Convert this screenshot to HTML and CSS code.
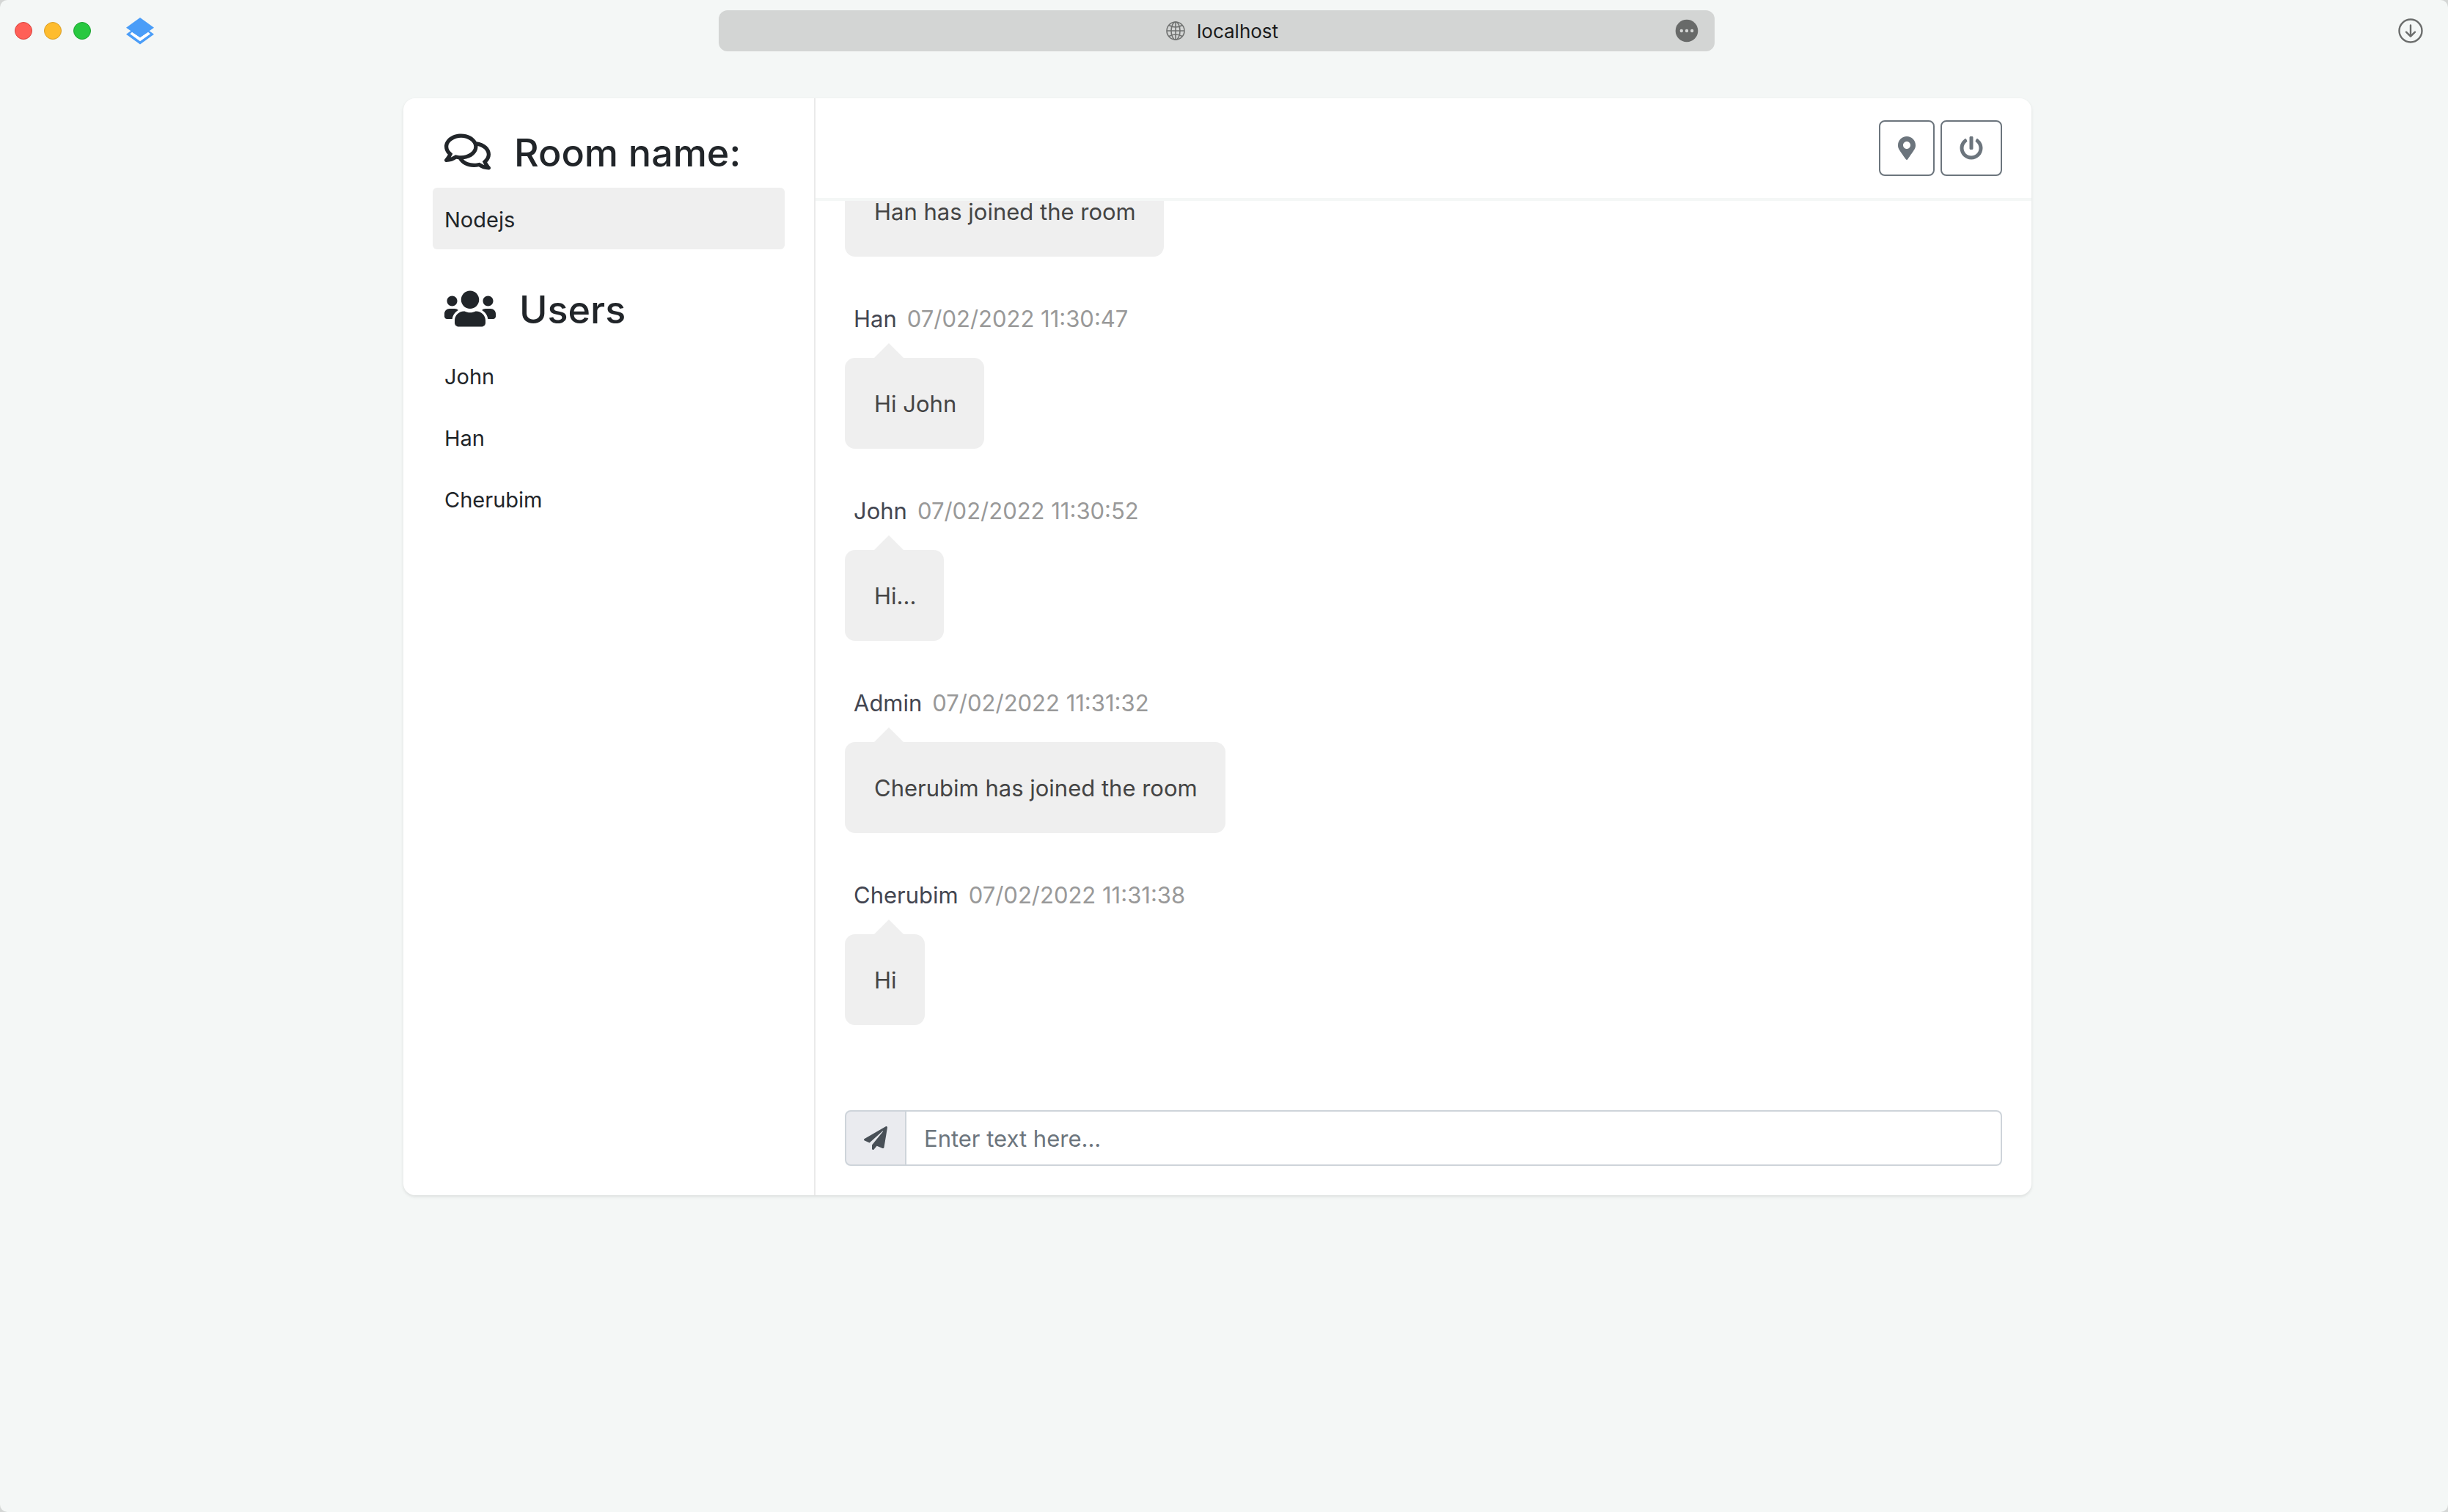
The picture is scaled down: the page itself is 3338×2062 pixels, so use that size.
FILE: index.html
```html
<!DOCTYPE html>
<html lang="en">
<head>
  <meta charset="utf-8">
  <title>Chat</title>
  <link rel="stylesheet" href="styles.css">
</head>
<body>
  <div class="window">
    <header class="toolbar">
      <div class="toolbar-left">
        <div class="lights">
          <button class="light light-close" type="button" aria-label="Close"></button>
          <button class="light light-minimize" type="button" aria-label="Minimize"></button>
          <button class="light light-zoom" type="button" aria-label="Zoom"></button>
        </div>
        <button class="icon-button" type="button" aria-label="Extension">
          <svg width="38" height="37" viewBox="0 0 38 37">
            <path fill="#4a9df8" d="M19 9 38 22.7 19 36.5 0 22.7z"/>
            <path fill="#fff" d="M5.3 22.3 8 19.7 19 27 30 19.7 33 22.3 19 32.3z"/>
            <path fill="#4a9df8" d="M19 0 38 13.7 19 27 0 13.7z"/>
          </svg>
        </button>
      </div>
      <div class="address-bar">
        <div class="address">
          <svg width="26" height="26" viewBox="0 0 26 26" fill="none" stroke="#6f7170" stroke-width="1.6" aria-hidden="true">
            <circle cx="13" cy="13" r="12"/>
            <ellipse cx="13" cy="13" rx="6" ry="12"/>
            <path d="M13 1v24M1 13h24M4 5.5q9 5 18 0M4 20.500q9-5 18 0"/>
          </svg>
          <input class="address-input" type="text" value="localhost" aria-label="Address">
        </div>
        <button class="icon-button address-more" type="button" aria-label="Page menu">
          <svg width="32" height="32" viewBox="0 0 32 32">
            <circle cx="16" cy="16" r="15.300" fill="#686a69"/>
            <g fill="#d3d5d4"><circle cx="8.800" cy="16" r="2.200"/><circle cx="16" cy="16" r="2.200"/><circle cx="23.200" cy="16" r="2.200"/></g>
          </svg>
        </button>
      </div>
      <div class="toolbar-right">
        <button class="icon-button" type="button" aria-label="Downloads">
          <svg width="34" height="34" viewBox="0 0 34 34" fill="none" stroke="#6b6d6c" stroke-width="2.400" stroke-linecap="round" stroke-linejoin="round">
            <circle cx="17" cy="17" r="15.500"/>
            <path d="M17 9.500v15M11 18.700l6 6 6-6"/>
          </svg>
        </button>
      </div>
    </header>

    <main class="page">
      <div class="card">
        <aside class="sidebar">
          <section>
            <h2 class="side-title">
              <svg width="63" height="56" viewBox="0 0 576 512" fill="currentColor" aria-hidden="true"><path d="M532 386.2c27.5-27.1 44-61.1 44-98.2 0-80-76.5-146.1-176.2-157.9C368.3 72.5 294.3 32 208 32 93.1 32 0 103.6 0 192c0 37 16.5 71 44 98.2-15.3 30.7-37.3 54.5-37.7 54.9-6.3 6.7-8.1 16.5-4.4 25 3.6 8.5 12 14 21.2 14 53.5 0 96.7-20.2 125.2-38.8 9.2 2.1 18.7 3.7 28.4 4.9C208.1 407.6 281.8 448 368 448c20.8 0 40.8-2.400 59.8-6.8C456.3 459.7 499.4 480 553 480c9.2 0 17.5-5.5 21.2-14 3.6-8.5 1.9-18.3-4.4-25-.4-.3-22.5-24.1-37.8-54.8zm-392.8-92.3L122.1 305c-14.1 9.1-28.5 16.3-43.1 21.4 2.7-4.7 5.4-9.7 8-14.8l15.5-31.1L77.7 256C64.2 242.6 48 220.7 48 192c0-60.7 73.3-112 160-112s160 51.3 160 112-73.3 112-160 112c-16.5 0-33-1.9-49-5.6l-19.8-4.5zM498.3 352l-24.7 24.4 15.5 31.1c2.6 5.1 5.3 10.1 8 14.8-14.6-5.1-29-12.3-43.1-21.4l-17.1-11.1-19.9 4.6c-16 3.7-32.5 5.6-49 5.6-54 0-102.2-20.1-131.3-49.7C338 339.5 416 272.9 416 192c0-3.4-.4-6.7-.7-10C479.7 196.5 528 238.8 528 288c0 28.7-16.2 50.6-29.7 64z"/></svg>
              Room name:
            </h2>
            <ul class="side-list">
              <li class="side-item side-item-active">Nodejs</li>
            </ul>
          </section>
          <section>
            <h2 class="side-title">
              <svg width="70" height="56" viewBox="0 0 640 512" fill="currentColor" aria-hidden="true"><path d="M96 224c35.3 0 64-28.7 64-64s-28.7-64-64-64-64 28.7-64 64 28.7 64 64 64zm448 0c35.3 0 64-28.7 64-64s-28.7-64-64-64-64 28.7-64 64 28.7 64 64 64zm32 32h-64c-17.6 0-33.5 7.1-45.1 18.6 40.3 22.1 68.9 62 75.1 109.4h66c17.7 0 32-14.3 32-32v-32c0-35.3-28.7-64-64-64zm-256 0c61.9 0 112-50.1 112-112S381.9 32 320 32 208 82.1 208 144s50.1 112 112 112zm76.8 32h-8.3c-20.8 10-43.9 16-68.5 16s-47.6-6-68.5-16h-8.3C179.6 288 128 339.6 128 403.2V432c0 26.5 21.5 48 48 48h288c26.5 0 48-21.5 48-48v-28.8c0-63.6-51.6-115.2-115.2-115.2zm-223.7-13.4C161.5 263.1 145.6 256 128 256H64c-35.3 0-64 28.7-64 64v32c0 17.7 14.3 32 32 32h65.9c6.3-47.4 34.9-87.3 75.2-109.4z"/></svg>
              Users
            </h2>
            <ul class="side-list">
              <li class="side-item">John</li>
              <li class="side-item">Han</li>
              <li class="side-item">Cherubim</li>
            </ul>
          </section>
        </aside>

        <section class="chat">
          <div class="chat-header">
            <button class="outline-button" type="button" aria-label="Share location">
              <svg width="24" height="32" viewBox="0 0 384 512" fill="currentColor"><path d="M172.268 501.67C26.97 291.031 0 269.413 0 192 0 85.961 85.961 0 192 0s192 85.961 192 192c0 77.413-26.97 99.031-172.268 309.67-9.535 13.774-29.93 13.773-39.464 0zM192 272c44.183 0 80-35.817 80-80s-35.817-80-80-80-80 35.817-80 80 35.817 80 80 80z"/></svg>
            </button>
            <button class="outline-button" type="button" aria-label="Leave room">
              <svg width="32" height="32" viewBox="0 0 512 512" fill="currentColor"><path d="M400 54.1c63 45 104 118.6 104 201.9 0 136.8-110.8 247.7-247.5 248C120 504.3 8.2 393 8 256.4 7.9 173.1 48.9 99.3 111.8 54.2c11.7-8.3 28-4.8 35 7.7L162.6 90c5.9 10.5 3.1 23.8-6.6 31-41.5 30.8-68 79.6-68 134.9-.1 92.3 74.5 168.1 168 168.1 91.6 0 168.6-74.2 168-169.1-.3-51.8-24.7-101.8-68.1-134-9.7-7.2-12.4-20.5-6.5-30.9l15.8-28.1c7-12.4 23.2-16.1 34.8-7.8zM296 264V24c0-13.3-10.7-24-24-24h-32c-13.3 0-24 10.7-24 24v240c0 13.3 10.7 24 24 24h32c13.3 0 24-10.7 24-24z"/></svg>
            </button>
          </div>

          <ul class="history">
            <li class="message">
              <p class="bubble">Han has joined the room</p>
            </li>
            <li class="message">
              <div class="meta"><span class="author">Han</span><time class="time">07/02/2022 11:30:47</time></div>
              <p class="bubble">Hi John</p>
            </li>
            <li class="message">
              <div class="meta"><span class="author">John</span><time class="time">07/02/2022 11:30:52</time></div>
              <p class="bubble">Hi...</p>
            </li>
            <li class="message">
              <div class="meta"><span class="author">Admin</span><time class="time">07/02/2022 11:31:32</time></div>
              <p class="bubble">Cherubim has joined the room</p>
            </li>
            <li class="message">
              <div class="meta"><span class="author">Cherubim</span><time class="time">07/02/2022 11:31:38</time></div>
              <p class="bubble">Hi</p>
            </li>
          </ul>

          <form class="composer">
            <label class="composer-addon" for="message" aria-label="Message">
              <svg width="32" height="32" viewBox="0 0 512 512" fill="currentColor" aria-hidden="true"><path d="M476 3.2L12.5 270.6c-18.1 10.4-15.8 35.6 2.2 43.2L121 358.4l287.3-253.2c5.5-4.9 13.3 2.6 8.6 8.3L176 407v80.5c0 23.6 28.5 32.9 42.5 15.8L282 426l124.6 52.2c14.2 6 30.4-2.9 33-18.2l72-432C515 7.8 493.3-6.8 476 3.2z"/></svg>
            </label>
            <input class="composer-input" id="message" type="text" placeholder="Enter text here...">
          </form>
        </section>
      </div>
    </main>
  </div>
</body>
</html>
```
FILE: styles.css
```css
*,
*::before,
*::after {
  box-sizing: border-box;
}

html {
  background: #d4d6d5;
}

body {
  margin: 0;
  color: #212529;
  font-family: Inter, "Liberation Sans", sans-serif;
  font-size: 31px;
  line-height: 42px;
}

button,
input {
  margin: 0;
  font: inherit;
}

button {
  cursor: pointer;
}

svg {
  display: block;
  flex: none;
}

ul {
  margin: 0;
  padding: 0;
  list-style: none;
}

.window {
  min-height: 100vh;
  border-radius: 10px;
  background: #f4f7f6;
}

/* Browser toolbar */

.toolbar {
  display: grid;
  grid-template-columns: minmax(0, 980fr) minmax(0, 1358fr) minmax(0, 1000fr);
  align-items: center;
  padding: 14px 0;
}

.toolbar-left {
  display: flex;
  align-items: center;
  gap: 48px;
  padding-left: 20px;
}

.toolbar-right {
  display: flex;
  justify-content: flex-end;
  padding-right: 34px;
}

.lights {
  display: flex;
  gap: 16px;
}

.light {
  width: 24px;
  height: 24px;
  padding: 0;
  border: 1px solid;
  border-radius: 50%;
}

.light-close {
  border-color: #d9453f;
  background: #ff5f57;
}

.light-minimize {
  border-color: #d99e27;
  background: #febc2e;
}

.light-zoom {
  border-color: #1da331;
  background: #28c840;
}

.icon-button {
  padding: 0;
  border: 0;
  background: none;
}

.address-bar {
  display: grid;
  grid-template-columns: 1fr auto 1fr;
  align-items: center;
  height: 56px;
  padding: 0 22px 0 38px;
  border-radius: 12px;
  background: #d3d5d4;
}

.address {
  display: flex;
  grid-column: 2;
  align-items: center;
  gap: 16px;
}

.address-input {
  width: 112px;
  padding: 2px 0 0;
  border: 0;
  background: none;
  color: #1a1b1b;
  font-size: 26px;
  line-height: 42px;
}

.address-more {
  justify-self: end;
}

/* Chat card */

.page {
  padding: 50px 18px 50px 0;
}

.card {
  display: flex;
  width: calc(100% - 80px);
  max-width: 2220px;
  margin: 0 auto;
  border-radius: 16px;
  background: #fff;
  box-shadow: 0 2px 4px rgba(0, 0, 0, 0.1);
}

.sidebar {
  display: flex;
  flex: none;
  flex-direction: column;
  gap: 48px;
  width: 562px;
  padding: 40px;
  border-right: 2px solid #eaeaea;
}

.side-title {
  display: flex;
  align-items: center;
  gap: 32px;
  margin: 0 0 12px;
  padding-left: 16px;
  font-size: 52px;
  font-weight: 500;
  line-height: 70px;
}

.side-title svg {
  margin-bottom: 4px;
}

.side-item {
  padding: 23px 16px 19px;
  border-radius: 6px;
  font-size: 29px;
}

.side-item-active {
  background: #efefef;
}

.chat {
  flex: 1;
  min-width: 0;
}

.chat-header {
  display: flex;
  justify-content: flex-end;
  gap: 8px;
  padding: 30px 40px;
  border-bottom: 4px solid #f4f7f6;
}

.outline-button {
  padding: 20px 24px;
  border: 2px solid #6c757d;
  border-radius: 8px;
  background: #fff;
  color: #6c757d;
}

.history {
  display: flex;
  flex-direction: column;
  justify-content: flex-end;
  max-height: 1200px;
  padding: 0 40px 12px;
  overflow: hidden;
}

.message {
  flex: none;
  padding-bottom: 64px;
}

.meta {
  display: flex;
  gap: 14px;
  margin-bottom: 32px;
  padding-left: 12px;
}

.author {
  color: #434651;
}

.time {
  color: #999;
}

.bubble {
  position: relative;
  width: fit-content;
  margin: 0;
  padding: 42px 38px 40px 40px;
  border-radius: 14px;
  background: #efefef;
  color: #444;
}

.bubble::after {
  position: absolute;
  bottom: 100%;
  left: 40px;
  border: 20px solid transparent;
  border-bottom-color: #efefef;
  content: "";
}

.composer {
  display: flex;
  padding: 40px;
}

.composer-addon {
  display: flex;
  align-items: center;
  padding: 0 24px;
  border: 2px solid #ced4da;
  border-radius: 8px 0 0 8px;
  background: #eaebef;
  color: #495057;
}

.composer-input {
  flex: 1;
  min-width: 0;
  height: 76px;
  padding: 0 24px;
  border: 2px solid #ced4da;
  border-left: 0;
  border-radius: 0 8px 8px 0;
  background: #fff;
  color: #495057;
}

.composer-input::placeholder {
  color: #6c757d;
  opacity: 1;
}
```
